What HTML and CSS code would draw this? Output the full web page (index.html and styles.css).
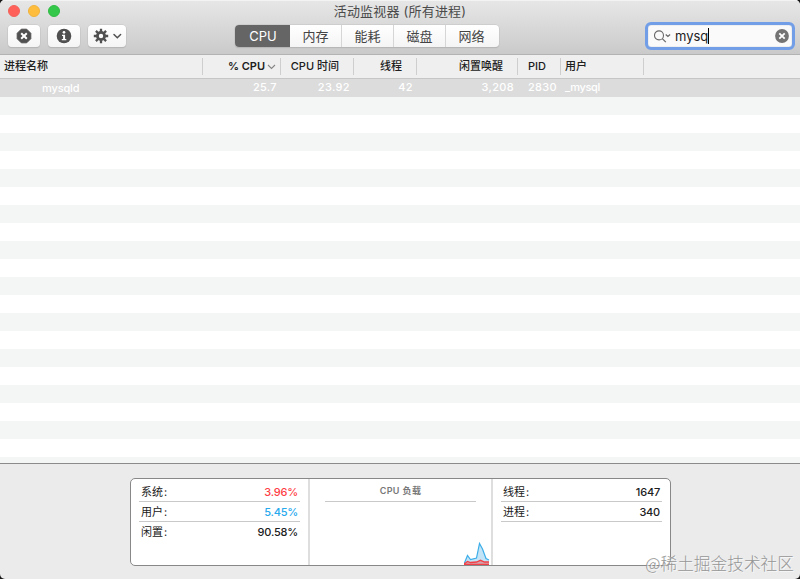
FILE: index.html
```html
<!DOCTYPE html>
<html lang="zh-CN">
<head>
<meta charset="utf-8">
<title>活动监视器</title>
<link rel="stylesheet" href="styles.css">
</head>
<body>
<div class="window">
  <header class="titlebar">
    <div class="title-row">
      <div class="lights"><i class="light red"></i><i class="light yellow"></i><i class="light green"></i></div>
      <div class="title">活动监视器 (所有进程)</div>
    </div>
    <div class="toolbar">
      <div class="buttons">
        <button class="btn"><svg width="16" height="16" viewBox="0 0 16 16"><path d="M5.300 1.200h5.400l4.100 4.100v5.400l-4.100 4.100H5.300L1.200 10.700V5.300z" fill="#505050" stroke="#505050" stroke-linejoin="round"/><path d="M5.200 5.200l5.600 5.600M10.800 5.200l-5.600 5.600" stroke="#fff" stroke-width="2"/></svg></button>
        <button class="btn"><svg width="16" height="16" viewBox="0 0 16 16"><circle cx="8" cy="8" r="7.300" fill="#505050"/><circle cx="8" cy="4.300" r="1.350" fill="#fff"/><path d="M6 6.700h3.100v4.200h1.200v1.400H5.800v-1.400h1.300V8H6z" fill="#fff"/></svg></button>
        <button class="btn gear"><svg width="30" height="16" viewBox="0 0 30 16"><g stroke="#505050" fill="none"><circle cx="8" cy="8" r="3.600" stroke-width="2.800"/><path d="M8 .8v3M8 12.200v3M.8 8h3M12.200 8h3M2.910 2.910l2.100 2.100M10.990 10.990l2.100 2.100M13.090 2.910l-2.100 2.100M5.010 10.990l-2.100 2.100" stroke-width="2.300"/><path d="M21 6.500l3.300 3.300 3.300-3.300" stroke-width="1.500" stroke-linecap="round"/></g></svg></button>
      </div>
      <nav class="tabs"><span class="tab active">CPU</span><span class="tab">内存</span><span class="tab">能耗</span><span class="tab">磁盘</span><span class="tab">网络</span></nav>
      <div class="search">
        <svg width="19" height="14" viewBox="0 0 19 14" fill="none" stroke="#686868"><circle cx="5" cy="6.400" r="4.500" stroke-width="1.100"/><path d="M8.300 9.700l3.500 3.500" stroke-width="1.200"/><path d="M11.700 5.500l2.200 2 2.200-2" stroke-width="1.200"/></svg>
        <span class="query">mysq</span><i class="caret"></i>
        <svg class="clear" width="14" height="14" viewBox="0 0 14 14"><circle cx="7" cy="7" r="6.900" fill="#737373"/><path d="M4.300 4.300l5.400 5.400M9.700 4.300l-5.400 5.400" stroke="#fff" stroke-width="1.800"/></svg>
      </div>
    </div>
  </header>
  <div class="columns head">
    <div class="name">进程名称</div>
    <div class="cpu sorted">% CPU<svg width="9" height="6" viewBox="0 0 9 6"><path d="M1 1l3.500 3.500L8 1" fill="none" stroke="#858585" stroke-width="1.100"/></svg></div>
    <div>CPU 时间</div><div>线程</div><div>闲置唤醒</div><div>PID</div><div class="user">用户</div>
  </div>
  <div class="columns selected">
    <div class="name">mysqld</div><div>25.7</div><div>23.92</div><div>42</div><div>3,208</div><div>2830</div><div class="user">_mysql</div>
  </div>
  <main class="rows"></main>
  <footer class="footer">
    <section class="panel">
      <div class="stats">
        <div class="stat"><span>系统<b>:</b></span><span class="system">3.96%</span></div>
        <div class="stat"><span>用户<b>:</b></span><span class="users">5.45%</span></div>
        <div class="stat"><span>闲置<b>:</b></span><span>90.58%</span></div>
      </div>
      <div class="load">
        <div class="load-title">CPU 负载</div>
        <svg class="chart" width="26" height="24" viewBox="0 0 26 24"><path d="M0 23L3.500 14.500l3 4 6-1.500L15.500 2.500l3 5.500 3.500 9.500 3 1.500v5H0z" fill="#c3e4f7"/><path d="M0 23l3.500-8.500 3 4 6-1.500L15.500 2.500l3 5.500 3.500 9.500 3 1.500" fill="none" stroke="#3caee9" stroke-width="1.200"/><path d="M0 23l3.500-2.500 3 1 6-.5 4-1.700 4 1.700h4.500V24H0z" fill="#d4a3ad"/><path d="M0 23l3.500-2.500 3 1 6-.5 4-1.700 4 1.700h4.500M0 23.300h25" fill="none" stroke="#f24047" stroke-width="1.300"/></svg>
      </div>
      <div class="stats totals">
        <div class="stat"><span>线程<b>:</b></span><span>1647</span></div>
        <div class="stat"><span>进程<b>:</b></span><span>340</span></div>
      </div>
    </section>
    <div class="watermark">@稀土掘金技术社区</div>
  </footer>
</div>
</body>
</html>
```
FILE: styles.css
```css
* { box-sizing: border-box; }
body { margin: 0; background: #171717; font-family: Inter, "Noto Sans CJK SC", sans-serif; font-size: 11px; color: #202020; }
.window { width: 800px; height: 579px; display: flex; flex-direction: column; overflow: hidden; border-radius: 5px; background: #ebebeb; }
.titlebar { height: 55px; flex: none; background: linear-gradient(#e7e7e7, #cacaca); border-bottom: 1px solid #b3b3b3; box-shadow: inset 0 1px #f3f3f3; }
.title-row { height: 23px; display: grid; grid-template-columns: 100px 600px 100px; }
.lights { display: flex; gap: 8px; padding: 5px 0 0 8px; }
.light { width: 12px; height: 12px; border-radius: 50%; border: 1px solid #f0635b; background: #ff605a; }
.yellow { background: #ffbd3e; border-color: #efb23c; }
.green { background: #34c84a; border-color: #30ba44; }
.title { text-align: center; font-size: 13px; line-height: 23px; letter-spacing: .2px; color: #4a4a4a; }
.toolbar { display: flex; height: 31px; padding-left: 8px; }
.buttons { display: flex; gap: 8px; width: 227px; padding-top: 2px; }
.btn { width: 32px; height: 22px; padding: 0; border: 0; border-radius: 4px; background: linear-gradient(#fff, #f4f4f4); box-shadow: 0 0 0 .5px #c2c2c2, 0 1px 1px #aaa; display: flex; align-items: center; justify-content: center; }
.gear { width: 38px; justify-content: flex-start; padding-left: 5px; }
.tabs { display: flex; margin-top: 2px; width: 264px; height: 22px; border-radius: 4px; overflow: hidden; background: linear-gradient(#fff, #f4f4f4); box-shadow: 0 0 0 .5px #c2c2c2, 0 1px 1px #aaa; }
.tab { flex: none; width: 52px; border-right: 1px solid #d6d6d6; text-align: center; font-size: 13px; line-height: 22px; color: #444; }
.tab:last-child { border: 0; width: 53px; padding-right: 2px; }
.tab.active { width: 55px; background: #656565; color: #fff; border: 0; padding-left: 1px; }
.search { display: flex; align-items: center; width: 150px; height: 28px; margin: -1px 0 0 146px; padding-left: 6px; border: 3px solid #719ee7; border-radius: 6px; background: #fafafa; box-shadow: inset 0 0 1px #7c8ca7; }
.query { margin-left: 2px; font-size: 13px; letter-spacing: 0; color: #222; }
.caret { width: 1px; height: 16px; background: #000; }
.clear { margin: 0 3px 0 auto; }
.columns { display: grid; grid-template-columns: 203px 78px 73px 63px 101px 43px 83px; flex: none; text-align: right; }
.head { height: 24px; background: #efefef; border-bottom: 1px solid #c6c6c6; line-height: 16px; padding-top: 3px; font-weight: 500; }
.head > div { height: 17px; border-right: 1px solid #cecece; padding-right: 14px; white-space: nowrap; }
.head .name { text-align: left; padding-left: 4px; }
.head .sorted { font-weight: 600; padding-right: 4px; }
.sorted svg { margin-left: 2px; }
.head .user, .selected .user { text-align: left; padding-left: 4px; }
.selected { height: 18px; background: #dcdcdc; color: #fff; line-height: 17px; font-weight: 500; letter-spacing: .35px; }
.selected > div { padding-right: 4px; }
.selected .name { text-align: left; padding-left: 42px; line-height: 19px; letter-spacing: -.15px; }
.selected .user { letter-spacing: -.3px; }
.rows { height: 366px; flex: none; background: repeating-linear-gradient(#f4f5f5 0 18px, #fff 18px 36px); }
.footer { height: 116px; flex: none; border-top: 1px solid #8b8b8b; padding: 14px 0 0 130px; position: relative; }
.panel { width: 541px; height: 88px; display: grid; grid-template-columns: 179px 183px 177px; border: 1px solid #888; border-radius: 5px; background: #fff; }
.panel > div { border-right: 2px solid #dedede; }
.panel > div:last-child { border: 0; }
.stats { padding: 3px 8px 0; }
.stat { display: flex; justify-content: space-between; height: 20px; line-height: 20px; padding: 0 2px; border-bottom: 1px solid #c9c9c9; font-weight: 500; letter-spacing: -.2px; }
.stat span:first-child { font-weight: 400; letter-spacing: 0; }
.stats:first-child .stat:last-child { border: 0; }
.stat b { font-weight: 400; margin-left: 1px; }
.stat .system { color: #ff4045; }
.stat .users { color: #27a9ee; }
.load { display: flex; flex-direction: column; }
.load-title { margin: 3px 15px 0; height: 20px; line-height: 18px; text-align: center; border-bottom: 1px solid #c9c9c9; color: #787878; font-size: 9px; font-weight: 600; letter-spacing: .4px; }
.chart { margin: auto 1px 0 auto; }
.watermark { position: absolute; right: 6px; bottom: 2px; font: 300 16.7px/28px "Noto Sans CJK SC", sans-serif; color: #969696; white-space: nowrap; text-shadow: 1px 1px #f8f8f8; }
```
